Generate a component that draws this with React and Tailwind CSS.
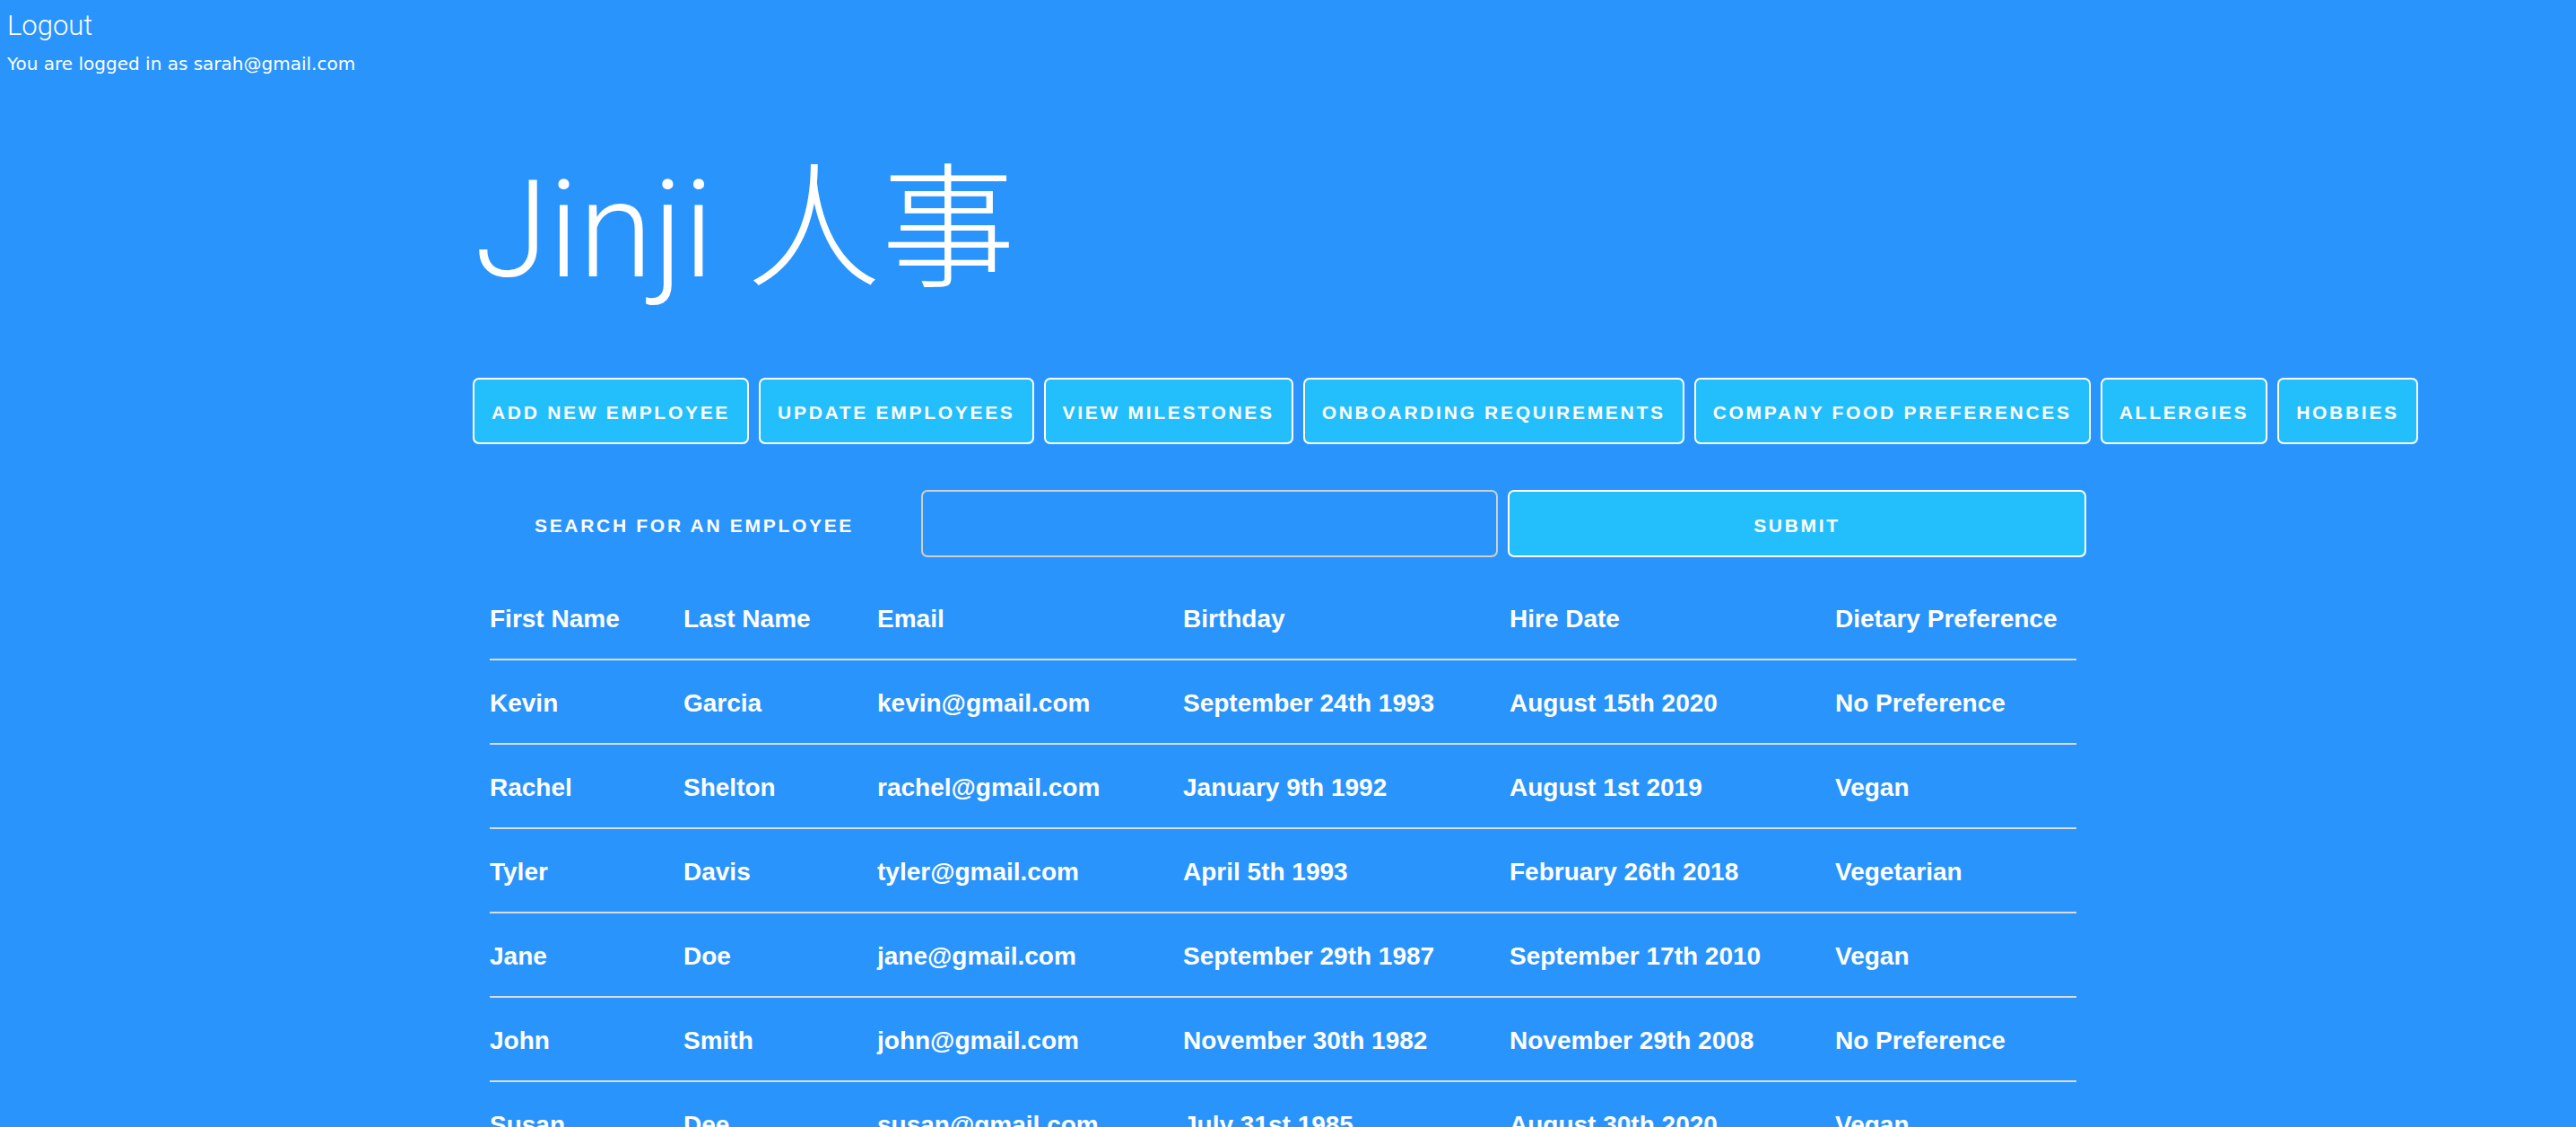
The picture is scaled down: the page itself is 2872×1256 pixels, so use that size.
import React from "react";

const buttons = [
  "ADD NEW EMPLOYEE",
  "UPDATE EMPLOYEES",
  "VIEW MILESTONES",
  "ONBOARDING REQUIREMENTS",
  "COMPANY FOOD PREFERENCES",
  "ALLERGIES",
  "HOBBIES",
];

const headers = ["First Name", "Last Name", "Email", "Birthday", "Hire Date", "Dietary Preference"];

const rows = [
  ["Kevin", "Garcia", "kevin@gmail.com", "September 24th 1993", "August 15th 2020", "No Preference"],
  ["Rachel", "Shelton", "rachel@gmail.com", "January 9th 1992", "August 1st 2019", "Vegan"],
  ["Tyler", "Davis", "tyler@gmail.com", "April 5th 1993", "February 26th 2018", "Vegetarian"],
  ["Jane", "Doe", "jane@gmail.com", "September 29th 1987", "September 17th 2010", "Vegan"],
  ["John", "Smith", "john@gmail.com", "November 30th 1982", "November 29th 2008", "No Preference"],
  ["Susan", "Dee", "susan@gmail.com", "July 31st 1985", "August 30th 2020", "Vegan"],
];

function Row({ cells }) {
  return (
    <div className="grid grid-cols-[216px_216px_341px_364px_363px_269px] h-[94px] items-center border-b-2 border-[#dcdcdc]">
      {cells.map((c, i) => (
        <div key={i} className="whitespace-nowrap pt-[3px]">
          {c}
        </div>
      ))}
    </div>
  );
}

export default function App() {
  return (
    <div className="min-h-screen bg-[#2994fc] text-white overflow-hidden">
      <div className="pl-[8px] pt-[13px]">
        <div className="font-['Roboto',sans-serif] font-light text-[31px] leading-none">Logout</div>
        <div className="mt-[17px] font-['DejaVu_Sans',sans-serif] text-[20px] leading-none">
          You are logged in as sarah@gmail.com
        </div>
      </div>

      <div className="ml-[527px]">
        <h1 className="mt-[101px] pl-[2px] font-['Roboto','Noto_Sans_CJK_SC',sans-serif] font-light text-[150px] leading-[150px] h-[150px]">
          Jinji 人事
        </h1>

        <div className="mt-[89px] flex gap-[11px] font-['Liberation_Sans',Arial,sans-serif] font-bold text-[21px] tracking-[2.7px]">
          {buttons.map((b) => (
            <button
              key={b}
              className="h-[74px] px-[19px] pt-[4px] rounded-[7px] border-2 border-white bg-[#22bffc] flex items-center justify-center whitespace-nowrap"
            >
              {b}
            </button>
          ))}
        </div>

        <div className="mt-[51px] flex items-center h-[75px] font-['Liberation_Sans',Arial,sans-serif] font-bold text-[21px] tracking-[2.7px]">
          <div className="w-[494px] text-center pt-[4px]">SEARCH FOR AN EMPLOYEE</div>
          <input
            className="ml-[6px] w-[643px] h-[75px] rounded-[7px] border-2 border-[#cfcfcf] bg-transparent outline-none"
            type="text"
          />
          <button className="ml-[11px] w-[645px] h-[75px] pt-[4px] rounded-[7px] border-2 border-white bg-[#22bffc]">
            SUBMIT
          </button>
        </div>

        <div className="ml-[19px] mt-[21px] w-[1769px] font-['Liberation_Sans',Arial,sans-serif] font-bold text-[28px]">
          <Row cells={headers} />
          {rows.map((r, i) => (
            <Row key={i} cells={r} />
          ))}
        </div>
      </div>
    </div>
  );
}
